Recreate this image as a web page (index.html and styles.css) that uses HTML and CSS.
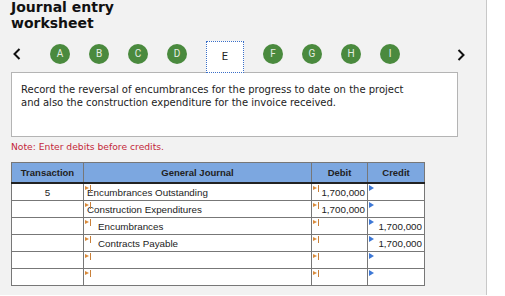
FILE: index.html
```html
<!DOCTYPE html>
<html>
<head>
<meta charset="utf-8">
<link rel="stylesheet" href="styles.css">
</head>
<body>
<div class="panel">
  <h1 class="title">Journal entry<br>worksheet</h1>
  <div class="nav">
    <span class="arrow prev"><svg width="8" height="12" viewBox="0 0 8 12"><polyline points="6.5,1 1.5,6 6.5,11" fill="none" stroke="#111" stroke-width="2"/></svg></span>
    <span class="dot">A</span>
    <span class="dot">B</span>
    <span class="dot">C</span>
    <span class="dot">D</span>
    <span class="tab">E</span>
    <span class="dot">F</span>
    <span class="dot">G</span>
    <span class="dot">H</span>
    <span class="dot">I</span>
    <span class="arrow next"><svg width="8" height="12" viewBox="0 0 8 12"><polyline points="1.5,1 6.5,6 1.5,11" fill="none" stroke="#111" stroke-width="2"/></svg></span>
  </div>
  <div class="prompt">Record the reversal of encumbrances for the progress to date on the project and also the construction expenditure for the invoice received.</div>
  <p class="note">Note: Enter debits before credits.</p>
  <table class="journal">
    <colgroup>
      <col class="w-tr"><col class="w-gj"><col class="w-dr"><col class="w-cr">
    </colgroup>
    <thead>
      <tr><th>Transaction</th><th>General Journal</th><th>Debit</th><th>Credit</th></tr>
    </thead>
    <tbody>
      <tr><td class="c-tr">5</td><td class="c-gj"><i class="mk"></i>Encumbrances Outstanding</td><td class="c-dr"><i class="mk"></i>1,700,000</td><td class="c-cr"><i class="bt"></i></td></tr>
      <tr><td class="c-tr"></td><td class="c-gj"><i class="mk"></i>Construction Expenditures</td><td class="c-dr"><i class="mk"></i>1,700,000</td><td class="c-cr"><i class="bt"></i></td></tr>
      <tr><td class="c-tr"></td><td class="c-gj indent"><i class="mk"></i>Encumbrances</td><td class="c-dr"><i class="mk"></i></td><td class="c-cr"><i class="bt"></i>1,700,000</td></tr>
      <tr><td class="c-tr"></td><td class="c-gj indent"><i class="mk"></i>Contracts Payable</td><td class="c-dr"><i class="mk"></i></td><td class="c-cr"><i class="bt"></i>1,700,000</td></tr>
      <tr><td class="c-tr"></td><td class="c-gj"><i class="mk"></i></td><td class="c-dr"><i class="mk"></i></td><td class="c-cr"><i class="bt"></i></td></tr>
      <tr><td class="c-tr"></td><td class="c-gj"><i class="mk"></i></td><td class="c-dr"><i class="mk"></i></td><td class="c-cr"><i class="bt"></i></td></tr>
    </tbody>
  </table>
</div>
</body>
</html>
```
FILE: styles.css
```css
html, body {
  margin: 0;
  padding: 0;
  background: #fff;
}
body {
  width: 505px;
  height: 296px;
  overflow: hidden;
}
.panel {
  width: 487px;
  height: 296px;
  background: #f2f2f2;
  border-right: 1px solid #c8c8c8;
  box-sizing: border-box;
  padding: 0 0 0 11px;
}
.title {
  margin: 0;
  margin-top: -1px;
  font-family: "DejaVu Sans", Verdana, sans-serif;
  font-weight: bold;
  font-size: 14px;
  line-height: 16px;
  color: #111;
}
.nav {
  display: flex;
  align-items: flex-start;
  gap: 19px;
  margin-top: 10px;
  height: 32px;
  position: relative;
  z-index: 2;
}
.arrow {
  display: flex;
  align-items: center;
  height: 20px;
  margin-top: 3px;
}
.prev {
  width: 18px;
  padding-left: 2px;
}
.next {
  margin-left: 38px;
  margin-top: 4px;
}
.dot {
  width: 20px;
  height: 20px;
  margin-top: 3px;
  border-radius: 50%;
  background: #4a8a3e;
  color: #e6eee4;
  font-family: Roboto, "Liberation Sans", sans-serif;
  font-size: 10px;
  line-height: 20px;
  text-align: center;
}
.tab {
  width: 38px;
  height: 32px;
  box-sizing: border-box;
  background: #fff;
  border: 1px dotted #3a6fc8;
  font-family: Roboto, "Liberation Sans", sans-serif;
  font-size: 11px;
  color: #222;
  line-height: 30px;
  text-align: center;
}
.prompt {
  width: 447px;
  height: 65px;
  box-sizing: border-box;
  margin-top: -1px;
  background: #fff;
  border: 1px solid #b4b4b4;
  padding: 10px 36px 0 9px;
  font-family: "DejaVu Sans", Verdana, sans-serif;
  font-size: 10px;
  line-height: 13px;
  color: #222;
}
.note {
  margin: 4px 0 0 0;
  font-family: "DejaVu Sans", Verdana, sans-serif;
  font-size: 9.2px;
  line-height: 12px;
  color: #c4283a;
}
.journal {
  margin-top: 9px;
  border-collapse: collapse;
  table-layout: fixed;
  width: 414px;
  font-family: "Liberation Sans", Arial, sans-serif;
  font-size: 9.8px;
  color: #222;
  border: 1px solid #777;
}
.w-tr { width: 72px; }
.w-gj { width: 228px; }
.w-dr { width: 56px; }
.w-cr { width: 57px; }
.journal th {
  background: #7ca7e0;
  font-weight: bold;
  font-size: 9.5px;
  height: 19px;
  padding: 0;
  border: 1px solid #777;
  border-bottom: 2px solid #222;
  color: #222;
  text-align: center;
}
.journal td {
  height: 14px;
  padding: 2px 2px 0 2px;
  border: 1px solid #777;
  background: #fff;
  position: relative;
  vertical-align: middle;
  white-space: nowrap;
  line-height: 12px;
}
.journal td.c-tr { text-align: center; }
.journal td.c-gj { padding-left: 3px; }
.journal td.indent { padding-left: 14px; }
.journal td.c-dr, .journal td.c-cr { text-align: right; }
.mk {
  position: absolute;
  left: 1px;
  top: 1px;
  width: 6px;
  height: 7px;
  background:
    linear-gradient(#c9803a, #c9803a) right top / 1px 7px no-repeat;
}
.mk::before {
  content: "";
  position: absolute;
  left: 0;
  top: 1px;
  border-left: 4px solid #d98a3a;
  border-top: 2.5px solid transparent;
  border-bottom: 2.5px solid transparent;
}
.bt {
  position: absolute;
  left: 1px;
  top: 1px;
  width: 0;
  height: 0;
  border-left: 5px solid #3d78d6;
  border-top: 3px solid transparent;
  border-bottom: 3px solid transparent;
}
```
